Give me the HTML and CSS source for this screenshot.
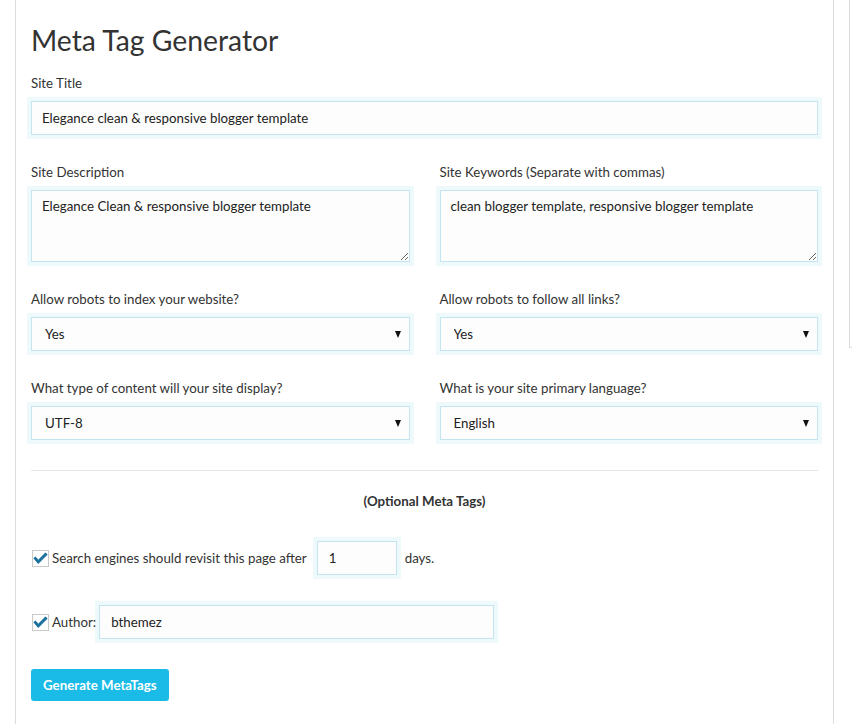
FILE: index.html
```html
<!DOCTYPE html>
<html>
<head>
<meta charset="utf-8">
<link rel="stylesheet" href="styles.css">
</head>
<body>
<div class="page">
  <div class="panel">
    <h1 class="title">Meta Tag Generator</h1>
    <div class="group">
      <label class="label">Site Title</label>
      <input class="field" type="text" value="Elegance clean &amp; responsive blogger template">
    </div>
    <div class="row">
      <div class="col">
        <label class="label">Site Description</label>
        <textarea class="field area">Elegance Clean &amp; responsive blogger template</textarea>
      </div>
      <div class="col">
        <label class="label">Site Keywords (Separate with commas)</label>
        <textarea class="field area">clean blogger template, responsive blogger template</textarea>
      </div>
    </div>
    <div class="row">
      <div class="col">
        <label class="label">Allow robots to index your website?</label>
        <div class="select-wrap"><select class="field select"><option>Yes</option></select></div>
      </div>
      <div class="col">
        <label class="label">Allow robots to follow all links?</label>
        <div class="select-wrap"><select class="field select"><option>Yes</option></select></div>
      </div>
    </div>
    <div class="row">
      <div class="col">
        <label class="label">What type of content will your site display?</label>
        <div class="select-wrap"><select class="field select"><option>UTF-8</option></select></div>
      </div>
      <div class="col">
        <label class="label">What is your site primary language?</label>
        <div class="select-wrap"><select class="field select"><option>English</option></select></div>
      </div>
    </div>
    <hr class="divider">
    <p class="optional">(Optional Meta Tags)</p>
    <div class="check-row">
      <span class="check"><svg width="15" height="13" viewBox="0 0 15 13"><path d="M0.3 6.3 L5.2 12 L14.7 2.4 L12.4 0.4 L5.2 7.8 L2.7 4.6 Z" fill="#1c71a0"/></svg></span>
      <span class="check-text">Search engines should revisit this page after</span>
      <input class="field small" type="text" value="1">
      <span class="days">days.</span>
    </div>
    <div class="check-row">
      <span class="check"><svg width="15" height="13" viewBox="0 0 15 13"><path d="M0.3 6.3 L5.2 12 L14.7 2.4 L12.4 0.4 L5.2 7.8 L2.7 4.6 Z" fill="#1c71a0"/></svg></span>
      <span class="check-text">Author:</span>
      <input class="field author" type="text" value="bthemez">
    </div>
    <button class="btn">Generate MetaTags</button>
  </div>
  <div class="sidebar"></div>
</div>
</body>
</html>
```

FILE: styles.css
```css
* { box-sizing: border-box; }
html, body { margin: 0; padding: 0; background: #fff; }
body {
  font-family: "Lato", "Open Sans", sans-serif;
  font-size: 13.3px;
  color: #333;
}
.page {
  display: flex;
  align-items: flex-start;
}
.panel {
  flex: 0 0 819px;
  margin-left: 15px;
  width: 819px;
  height: 724px;
  border-left: 1px solid #dcdcdc;
  border-right: 1px solid #dcdcdc;
  padding: 0 15px;
}
.sidebar {
  flex: 0 0 10px;
  margin-left: 15px;
  width: 10px;
  height: 348px;
  border-left: 1px solid #dcdcdc;
  border-bottom: 1px solid #dcdcdc;
}
.title {
  margin: 22px 0 0;
  font-size: 28.3px;
  line-height: 36px;
  font-weight: 400;
  color: #333;
}
.label {
  display: block;
  line-height: 20px;
  margin-bottom: 8px;
  color: #333;
}
.group { margin-top: 15px; }
.field {
  display: block;
  width: 100%;
  height: 34px;
  border: 1px solid #c4e5ef;
  background: #fdfdfd;
  box-shadow: 0 0 0 4px #eef9fc;
  font-family: inherit;
  font-size: 13.3px;
  color: #222;
  padding: 0 10px;
  outline: none;
  border-radius: 0;
}
.row {
  display: flex;
  gap: 30px;
  margin-top: 27px;
}
.col { flex: 1; min-width: 0; }
.area {
  height: 72px;
  padding: 5px 10px;
  line-height: 20px;
  resize: vertical;
}
.select-wrap { position: relative; }
.select {
  -webkit-appearance: none;
  appearance: none;
  padding: 0 13px;
}
.select-wrap::after {
  content: "";
  position: absolute;
  right: 9px;
  top: 14px;
  border-left: 3.5px solid transparent;
  border-right: 3.5px solid transparent;
  border-top: 7px solid #111;
}
.divider {
  margin: 30px 0 0;
  border: 0;
  border-top: 1px solid #e6e6e6;
}
.optional {
  margin: 20px 0 0;
  text-align: center;
  font-weight: 700;
  line-height: 20px;
}
.check-row {
  display: flex;
  align-items: center;
  margin-top: 30px;
}
.check {
  width: 17px;
  height: 17px;
  border: 1px solid #c9c9c9;
  background: #fff;
  margin-left: 1px;
  display: flex;
  align-items: center;
  justify-content: center;
  padding-top: 1px;
}
.check-text {
  margin-left: 3px;
  position: relative;
  z-index: 1;
}
.small {
  width: 80px;
  margin-left: 10px;
  padding: 0 11px;
}
.days { margin-left: 8px; }
.author {
  width: 395px;
  margin-left: 3px;
  padding: 0 11px;
}
.btn {
  display: block;
  margin-top: 30px;
  height: 32px;
  padding: 0 12px;
  border: 0;
  border-radius: 3px;
  background: #1bbbe8;
  color: #fff;
  font-family: inherit;
  font-size: 13.3px;
  font-weight: 700;
}
```
